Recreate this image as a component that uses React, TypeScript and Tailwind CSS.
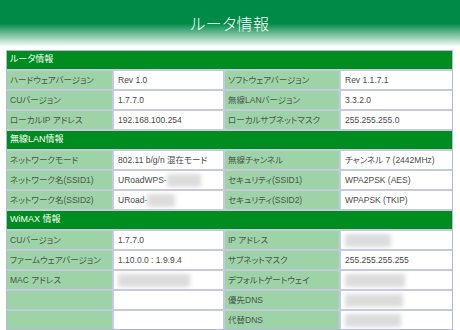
import React from "react";

type Cell = { text?: string; blur?: number };
type Row = [string, Cell, string, Cell];

const sections: { title: string; rows: Row[] }[] = [
  {
    title: "ルータ情報",
    rows: [
      ["ハードウェアバージョン", { text: "Rev 1.0" }, "ソフトウェアバージョン", { text: "Rev 1.1.7.1" }],
      ["CUバージョン", { text: "1.7.7.0" }, "無線LANバージョン", { text: "3.3.2.0" }],
      ["ローカルIP アドレス", { text: "192.168.100.254" }, "ローカルサブネットマスク", { text: "255.255.255.0" }],
    ],
  },
  {
    title: "無線LAN情報",
    rows: [
      ["ネットワークモード", { text: "802.11 b/g/n 混在モード" }, "無線チャンネル", { text: "チャンネル 7 (2442MHz)" }],
      ["ネットワーク名(SSID1)", { text: "URoadWPS-", blur: 34 }, "セキュリティ(SSID1)", { text: "WPA2PSK (AES)" }],
      ["ネットワーク名(SSID2)", { text: "URoad-", blur: 28 }, "セキュリティ(SSID2)", { text: "WPAPSK (TKIP)" }],
    ],
  },
  {
    title: "WiMAX 情報",
    rows: [
      ["CUバージョン", { text: "1.7.7.0" }, "IP アドレス", { blur: 46 }],
      ["ファームウェアバージョン", { text: "1.10.0.0 : 1.9.9.4" }, "サブネットマスク", { text: "255.255.255.255" }],
      ["MAC アドレス", { blur: 72 }, "デフォルトゲートウェイ", { blur: 60 }],
      ["", {}, "優先DNS", { blur: 58 }],
      ["", {}, "代替DNS", { blur: 56 }],
    ],
  },
];

function Label({ text }: { text: string }) {
  return (
    <div className="flex h-[18px] items-center bg-[#9ed3a8] pl-[3px] text-[8.5px] text-[#4a544c] [font-feature-settings:'palt'] whitespace-nowrap overflow-hidden">
      {text}
    </div>
  );
}

function Value({ cell }: { cell: Cell }) {
  return (
    <div className="flex h-[18px] items-center bg-white pl-[4px] text-[8.5px] text-[#4a4a4a] [font-feature-settings:'palt'] whitespace-nowrap overflow-hidden">
      {cell.text && <span>{cell.text}</span>}
      {cell.blur && (
        <span
          className="h-[13px] bg-[#dcdcdc] blur-[2px]"
          style={{ width: cell.blur }}
        />
      )}
    </div>
  );
}

export default function App() {
  return (
    <div
      className="h-[330px] w-[460px] overflow-hidden bg-white"
      style={{ fontFamily: '"Liberation Sans", "Noto Sans CJK JP", sans-serif' }}
    >
      <div className="flex h-[47px] items-start justify-center bg-[linear-gradient(to_bottom,#008a47_0%,#008a47_50%,#ffffff_100%)] pt-[11px]">
        <h1
          className="text-[16px] font-light text-white [font-feature-settings:'palt'] tracking-[0.5px]"
          style={{ fontFamily: '"Noto Sans CJK JP", sans-serif' }}
        >
          ルータ情報
        </h1>
      </div>
      <div className="ml-[6px] mt-[3px] w-[447px] bg-[#b3b9d8] p-px">
        <div className="grid grid-cols-[105px_109px_114px_1fr] gap-[2px] bg-[#c6cae0]">
          {sections.map((s) => (
            <React.Fragment key={s.title}>
              <div className="col-span-4 flex h-[18px] items-center bg-[#008c1e] pl-[3px] text-[9px] text-white [font-feature-settings:'palt']">
                {s.title}
              </div>
              {s.rows.map((r, i) => (
                <React.Fragment key={i}>
                  <Label text={r[0]} />
                  <Value cell={r[1]} />
                  <Label text={r[2]} />
                  <Value cell={r[3]} />
                </React.Fragment>
              ))}
            </React.Fragment>
          ))}
        </div>
      </div>
    </div>
  );
}
